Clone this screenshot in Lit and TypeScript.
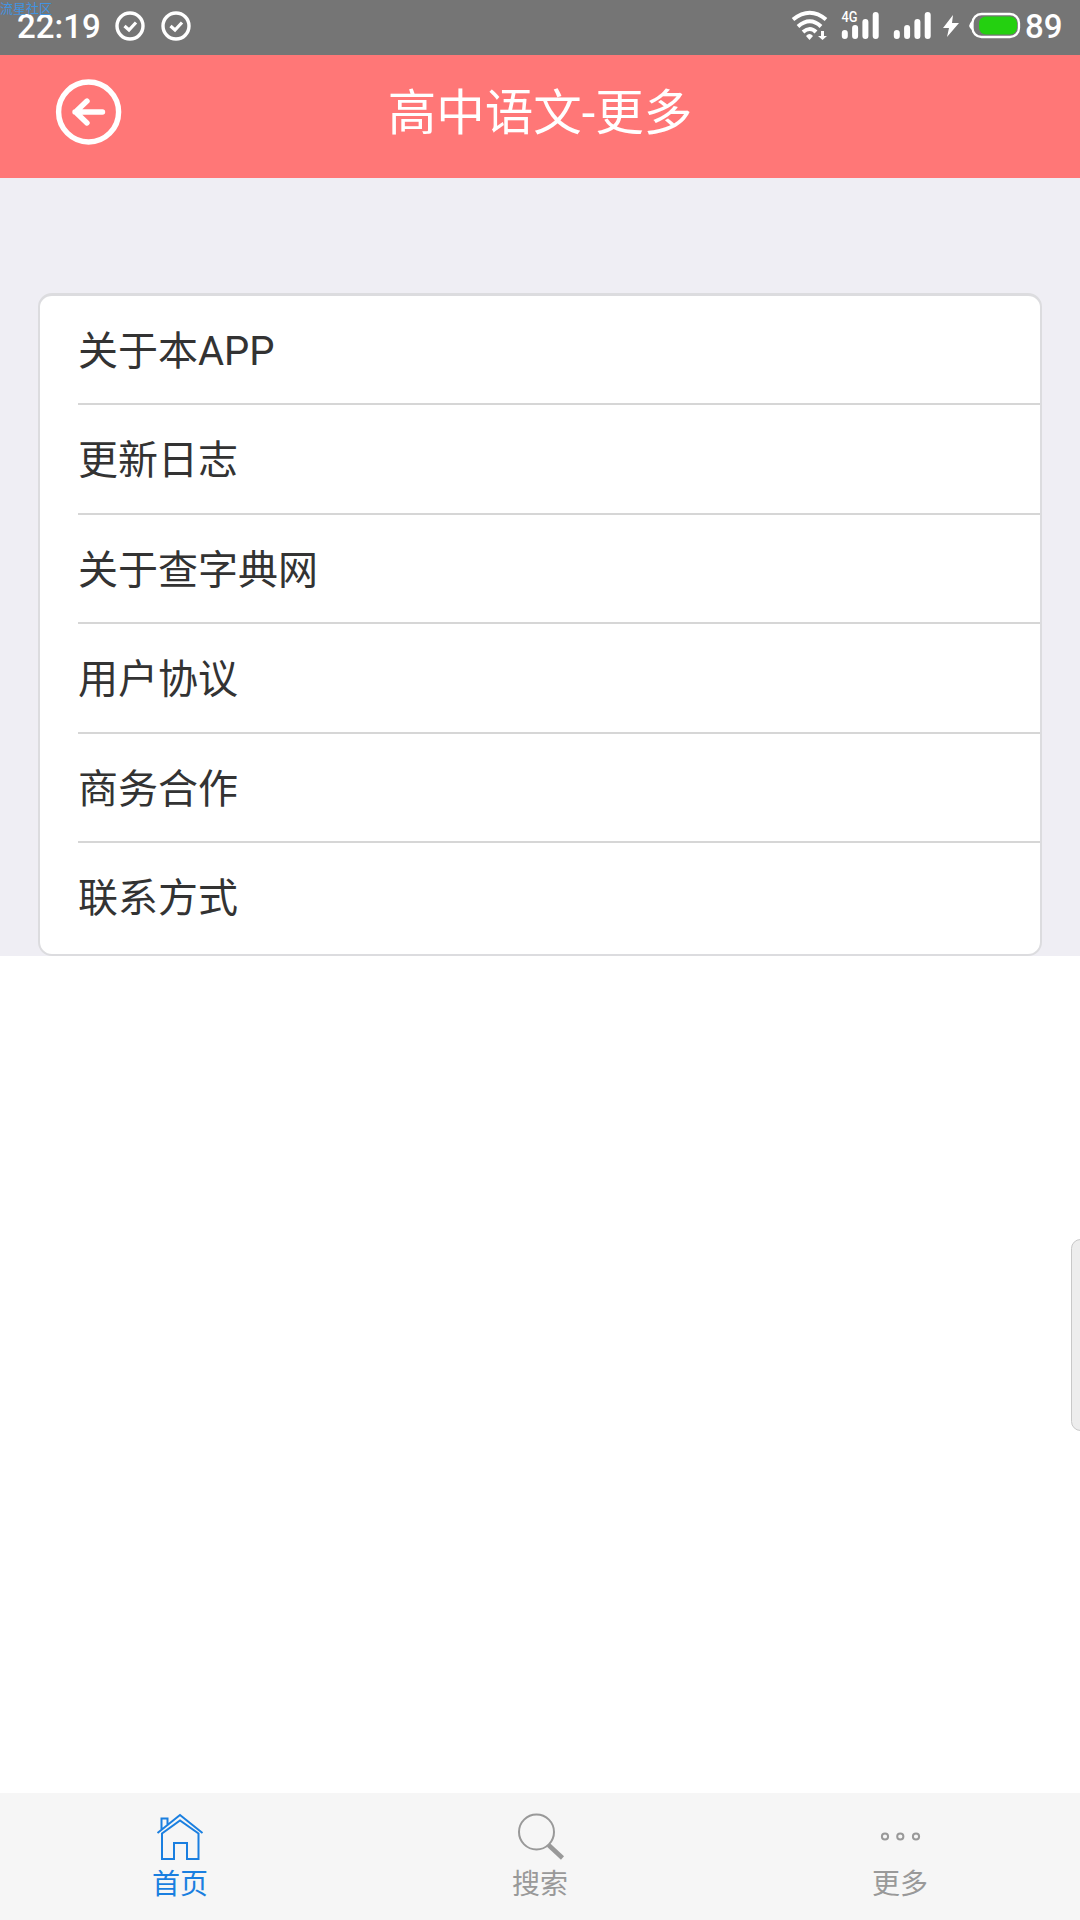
import { LitElement, html, css, svg } from "lit";
import { customElement, property } from "lit/decorators.js";

@customElement("status-bar")
class StatusBar extends LitElement {
  static styles = css`
    :host { display: block; position: relative; height: 55px; background: #757575; color: #fff;
      font: 500 33px/54px Roboto, sans-serif; }
    .bar { display: flex; justify-content: space-between; align-items: flex-start; height: 55px; padding: 0 18px 0 17px; }
    .group { display: flex; align-items: flex-start; }
    .clock { width: 98px; white-space: nowrap; }
    .level { width: 37px; }
    svg { display: block; }
    .mark { position: absolute; left: 0; top: 0; color: #4193e0;
      font: 400 13px/15px "Noto Sans CJK SC", sans-serif; }
  `;

  render() {
    const check = (x: number) => svg`
      <circle cx=${x} cy="26" r="13" stroke-width="3.4"/>
      <path d="M${x - 5.5} 26l4.5 4 7-7.5" stroke-width="3.2"/>`;
    const bars = (x: number) => svg`
      <path d="M${x} 33v3M${x + 10.3} 28v8M${x + 20.6} 22v14M${x + 30.9} 15v21" stroke-width="6" stroke-linecap="round"/>`;
    return html`
      <div class="bar">
        <div class="group">
          <span class="clock">22:19</span>
          <svg width="85" height="55" viewBox="115 0 85 55" fill="none" stroke="#fff">${check(130)}${check(176)}</svg>
        </div>
        <div class="group">
          <svg width="235" height="55" viewBox="790 0 235 55" fill="none" stroke="#fff">
            <path d="M793 19.500Q810 6 826 19.500M798 26.500Q810 16 821 26.500M803 32Q810 26 816 32" stroke-width="4"/>
            <path d="M806 36Q809.500 32 813 36L809.500 40Z" fill="#fff" stroke="none"/>
            <path d="M821 31h3v5h3l-4.500 4-4.500-4h3z" fill="#fff" stroke="none"/>
            <text x="841.500" y="22" fill="#fff" stroke="none" font-size="14" font-family="Roboto, sans-serif" font-weight="500" textLength="16" lengthAdjust="spacingAndGlyphs">4G</text>
            ${bars(844.8)}${bars(896.8)}
            <path d="M953 15L943 28h6l-2 9 12-14h-7z" fill="#fff" stroke="none"/>
            <rect x="972.500" y="14" width="46.500" height="23" rx="9" stroke-width="2.300"/>
            <path d="M972 21q-5.500 4.500 0 9z" fill="#fff" stroke="none"/>
            <rect x="979" y="16.500" width="38" height="18" rx="7" fill="#24d010" stroke="none"/>
          </svg>
          <span class="level">89</span>
        </div>
      </div>
      <span class="mark">流星社区</span>`;
  }
}

@customElement("title-bar")
class TitleBar extends LitElement {
  @property() heading = "";
  static styles = css`
    :host { display: block; background: #ff7777; color: #fff; }
    .bar { display: grid; grid-template-columns: 120px 1fr 120px; align-items: center; height: 123px; box-sizing: border-box; padding-bottom: 9px; }
    svg { display: block; justify-self: end; margin-right: -3px; }
    .title { text-align: center; padding-top: 4px; font: 400 48.5px/60px Roboto, "Noto Sans CJK SC", sans-serif; }
  `;

  render() {
    return html`
      <div class="bar">
        <svg width="68" height="68" viewBox="0 0 68 68" fill="none" stroke="#fff" stroke-linecap="round" stroke-linejoin="round">
          <circle cx="33.600" cy="34" r="30" stroke-width="5.400"/>
          <path d="M47.500 34H20M32 23L20.500 34L32 45" stroke-width="5.400"/>
        </svg>
        <div class="title">${this.heading}</div>
      </div>`;
  }
}

@customElement("menu-list")
class MenuList extends LitElement {
  @property({ attribute: false }) items: string[] = [];
  static styles = css`
    :host { display: block; background: #efeef4; padding: 115px 38px 0; }
    .card { display: flex; flex-direction: column; box-sizing: border-box; height: 663px;
      border: 2px solid #dcdcdf; border-top-width: 3px; border-radius: 14px; background: #fff; padding-left: 38px; overflow: hidden; }
    .row { flex: 0 0 109.6px; box-sizing: border-box; height: 109.6px; min-height: 0; border-bottom: 2px solid #d6d6d6; color: #333;
      font: 400 40px/111px Roboto, "Noto Sans CJK SC", sans-serif; }
    .row:first-child { flex-basis: 109px; }
    .row:last-child { border-bottom: 0; }
  `;

  render() {
    return html`<div class="card">${this.items.map((item) => html`<div class="row">${item}</div>`)}</div>`;
  }
}

@customElement("tab-bar")
class TabBar extends LitElement {
  static styles = css`
    :host { display: block; background: #f6f6f6; }
    .bar { display: grid; grid-template-columns: repeat(3, 1fr); height: 127px; }
    .tab { display: flex; flex-direction: column; align-items: center; padding-top: 16px; color: #999;
      font: 400 28px/40px Roboto, "Noto Sans CJK SC", sans-serif; }
    .active { color: #1a7fe0; }
    svg { display: block; }
  `;

  render() {
    const tab = (label: string, active: boolean, icon: unknown) => html`
      <div class="tab ${active ? "active" : ""}">
        <svg width="56" height="56" viewBox="0 0 56 56" fill="none" stroke="currentColor" stroke-width="2">${icon}</svg>
        <span>${label}</span>
      </div>`;
    return html`
      <div class="bar">
        ${tab("首页", true, svg`
          <path d="M5.500 24L28 6l22.500 18M9.500 21V9.500h6v6.500M10 24.500V50h12V34h13v16h11.500V24.500L28 11.500z"/>`)}
        ${tab("搜索", false, svg`
          <circle cx="24.500" cy="23" r="17.500"/>
          <path d="M36.500 36l14 13" stroke-width="4.500"/>`)}
        ${tab("更多", false, svg`
          <circle cx="13" cy="27.500" r="3.100"/><circle cx="28.300" cy="27.500" r="3.100"/><circle cx="44" cy="27.500" r="3.100"/>`)}
      </div>`;
  }
}

@customElement("app-root")
class AppRoot extends LitElement {
  static styles = css`
    :host { display: block; }
    .page { position: relative; display: flex; flex-direction: column; height: 1920px; background: #fff; overflow: hidden; }
    .spacer { flex: 1; }
    .handle { position: absolute; right: -10px; top: 1239px; width: 19px; height: 192px; box-sizing: border-box;
      border: 1.500px solid #c8c8c8; border-radius: 10px; background: #ededed; }
  `;

  render() {
    return html`
      <div class="page">
        <status-bar></status-bar>
        <title-bar heading="高中语文-更多"></title-bar>
        <menu-list .items=${["关于本APP", "更新日志", "关于查字典网", "用户协议", "商务合作", "联系方式"]}></menu-list>
        <div class="spacer"></div>
        <tab-bar></tab-bar>
        <div class="handle"></div>
      </div>`;
  }
}
